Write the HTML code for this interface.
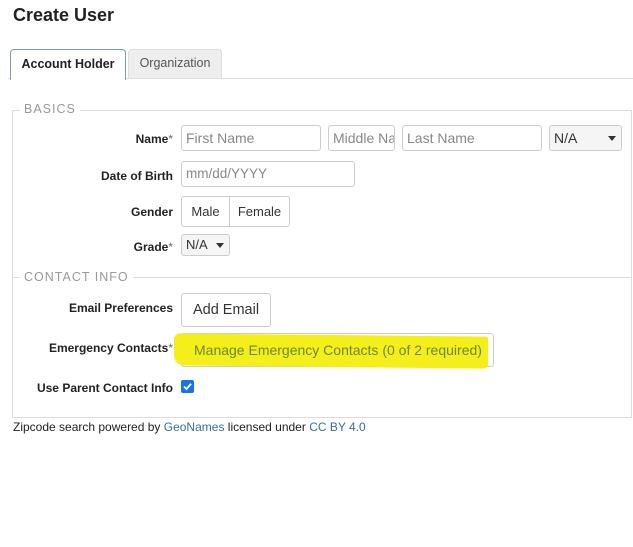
<!DOCTYPE html><html><head><style>
body{margin:0;width:633px;height:547px;background:#fff;font-family:"Liberation Sans",sans-serif;color:#222;position:relative;overflow:hidden}
.a{position:absolute}
.lbl{position:absolute;right:460px;font-size:12px;font-weight:bold;color:#222;text-align:right;white-space:nowrap}
.in{position:absolute;border:1px solid #ccc;border-radius:3px;box-sizing:border-box;font-size:14px;color:#888;padding:0 4px;line-height:24px;background:#fff}
.btn{position:absolute;border:1px solid #ccc;border-radius:3px;box-sizing:border-box;font-size:13px;color:#333;text-align:center;background:#fff}
.leg{position:absolute;font-size:12.5px;color:#999;letter-spacing:1px;background:#fff;padding:0 4px}
.car{position:absolute;width:0;height:0;border-left:4px solid transparent;border-right:4px solid transparent;border-top:5px solid #333}
</style></head><body>
<div class="a" style="left:13px;top:5px;font-size:18px;font-weight:bold">Create User</div>
<div class="a" style="left:8px;top:78px;width:625px;height:1px;background:#ddd"></div>
<div class="a" style="left:10px;top:49px;width:116px;height:31px;box-sizing:border-box;border:1px solid #7a9ea8;border-bottom:none;border-radius:4px 4px 0 0;background:#fff;font-size:12.5px;font-weight:bold;text-align:center;line-height:28px">Account Holder</div>
<div class="a" style="left:128px;top:49px;width:94px;height:29px;box-sizing:border-box;border:1px solid #ddd;border-bottom:none;border-radius:4px 4px 0 0;background:#eee;font-size:12.5px;color:#555;text-align:center;line-height:27px">Organization</div>
<div class="a" style="left:12px;top:110px;width:620px;height:308px;box-sizing:border-box;border:1px solid #ddd"></div>
<div class="leg" style="left:20px;top:102px">BASICS</div>
<div class="a" style="left:12px;top:277px;width:620px;height:1px;background:#ddd"></div>
<div class="leg" style="left:20px;top:270px">CONTACT INFO</div>

<div class="lbl" style="top:132px">Name<span style="font-weight:normal;color:#666">*</span></div>
<div class="in" style="left:181px;top:125px;width:140px;height:26px">First Name</div>
<div class="in" style="left:328px;top:125px;width:67px;height:26px;overflow:hidden;white-space:nowrap">Middle Na</div>
<div class="in" style="left:402px;top:125px;width:140px;height:26px">Last Name</div>
<div class="in" style="left:549px;top:125px;width:73px;height:26px;background:#f5f5f5;color:#333">N/A</div>
<div class="car" style="left:608px;top:136px"></div>

<div class="lbl" style="top:169px">Date of Birth</div>
<div class="in" style="left:181px;top:161px;width:174px;height:26px;font-size:13.5px">mm/dd/YYYY</div>

<div class="lbl" style="top:205px">Gender</div>
<div class="btn" style="left:181px;top:196px;width:49px;height:31px;line-height:29px;border-radius:3px 0 0 3px">Male</div>
<div class="btn" style="left:229px;top:196px;width:61px;height:31px;line-height:29px;border-radius:0 3px 3px 0">Female</div>

<div class="lbl" style="top:240px">Grade<span style="font-weight:normal;color:#666">*</span></div>
<div class="in" style="left:181px;top:234px;width:49px;height:22px;line-height:20px;background:#f5f5f5;color:#333;font-size:13px">N/A</div>
<div class="car" style="left:216px;top:243px"></div>

<div class="lbl" style="top:301px">Email Preferences</div>
<div class="btn" style="left:181px;top:293px;width:90px;height:34px;line-height:32px;font-size:14.5px">Add Email</div>

<div class="lbl" style="top:341px">Emergency Contacts<span style="font-weight:normal;color:#666">*</span></div>
<div class="btn" style="left:181px;top:333px;width:313px;height:34px"></div>
<div class="a" style="left:174px;top:335px;width:314px;height:32px;background:#f4ef1a;border-radius:6px 2px 4px 10px;transform:skewY(0.6deg)"></div>
<div class="a" style="left:194px;top:342px;font-size:14px;color:#6b8a2a">Manage Emergency Contacts (0 of 2 required)</div>

<div class="lbl" style="top:381px">Use Parent Contact Info</div>
<div class="a" style="left:181px;top:380px;width:13px;height:13px;background:#1a73e8;border-radius:2px"><svg width="13" height="13"><path d="M3 6.5L5.5 9L10 3.8" stroke="#fff" stroke-width="1.8" fill="none"/></svg></div>

<div class="a" style="left:13px;top:420px;font-size:12px;color:#222">Zipcode search powered by <span style="color:#3a6f9a">GeoNames</span> licensed under <span style="color:#3a6f9a">CC BY 4.0</span></div>
</body></html>
